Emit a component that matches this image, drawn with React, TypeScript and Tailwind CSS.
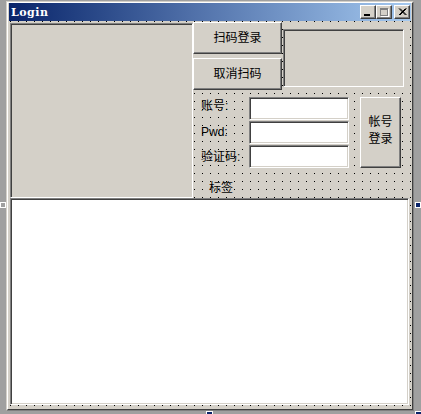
const raised =
  "border border-t-white border-l-white border-r-[#404040] border-b-[#404040] shadow-[inset_-1px_-1px_0_#808080] bg-[#d4d0c8]";
const sunken =
  "border border-t-[#808080] border-l-[#808080] border-r-white border-b-white shadow-[inset_1px_1px_0_#404040,inset_-1px_-1px_0_#d4d0c8]";

const TitleButton = ({ children }: { children: React.ReactNode }) => (
  <div className={`${raised} w-[16px] h-[14px] relative`}>{children}</div>
);

const FormButton = ({ children, className }: { children: React.ReactNode; className: string }) => (
  <div className={`${raised} flex flex-col items-center justify-center text-[12px] leading-[17px] text-black text-center whitespace-nowrap ${className}`}>
    {children}
  </div>
);

const Edit = () => <div className={`${sunken} bg-white w-[100px] h-[23px]`} />;

export default function App() {
  return (
    <div className="relative w-[421px] h-[414px] overflow-hidden bg-[#a0a0a0] pl-[6px] pt-[1px] font-['Liberation_Sans','Noto_Sans_CJK_SC',sans-serif] text-[12px]">
      {/* window */}
      <div className="w-[408px] h-[410px] border border-t-[#d4d0c8] border-l-[#d4d0c8] border-r-[#808080] border-b-[#808080]">
        <div className="h-full border border-t-white border-l-white border-r-[#404040] border-b-[#404040] bg-[#d4d0c8] px-px flex flex-col">
          {/* title bar */}
          <div className="h-[18px] shrink-0 flex items-center bg-gradient-to-r from-[#0a246a] via-[#4f6fa8] via-45% to-[#a6caf0] pl-[2px] pr-px">
            <span className="font-['DejaVu_Serif',serif] font-bold text-[11px] text-white leading-none tracking-[0.5px]">Login</span>
            <div className="ml-auto flex items-center">
              <TitleButton>
                <div className="absolute left-[3px] top-[8px] w-[6px] h-[2px] bg-black" />
              </TitleButton>
              <TitleButton>
                <div className="absolute left-[3px] top-[2px] w-[8px] h-[8px] border border-t-2 border-[#808080] shadow-[1px_1px_0_#fff]" />
              </TitleButton>
              <div className="ml-[2px]">
                <TitleButton>
                  <svg className="absolute left-[3px] top-[2px]" width="9" height="8" viewBox="0 0 9 8">
                    <path d="M1 0.5 L7.5 7 M2 0.5 L8.5 7 M7.5 0.5 L1 7 M8.5 0.5 L2 7" stroke="#000" strokeWidth="1" fill="none" />
                  </svg>
                </TitleButton>
              </div>
            </div>
          </div>

          {/* client area with design grid */}
          <div className="ml-px w-[401px] h-[388px] flex flex-col bg-[radial-gradient(circle_at_0.5px_0.5px,#000_0.8px,transparent_0.8px)] bg-[length:8px_8px]">
            <div className="flex h-[177px] shrink-0">
              <div className={`${sunken} bg-[#d4d0c8] mt-[2px] w-[183px] h-[175px]`} />
              <div className="flex flex-col">
                <div className="flex">
                  <div className="flex flex-col gap-[4px] pt-px">
                    <FormButton className="w-[89px] h-[32px]">扫码登录</FormButton>
                    <FormButton className="w-[89px] h-[32px]">取消扫码</FormButton>
                  </div>
                  <div className={`${sunken} bg-[#d4d0c8] ml-px mt-[8px] w-[121px] h-[58px]`} />
                </div>
                <div className="flex mt-[7px]">
                  <div className="w-[56px] pl-[8px] flex flex-col gap-px text-black">
                    <div className="h-[23px] pt-[2px] leading-[14px]">账号:</div>
                    <div className="h-[23px] pt-[4px] leading-[14px]">Pwd:</div>
                    <div className="h-[23px] pt-[5px] leading-[14px]">验证码:</div>
                  </div>
                  <div className="flex flex-col gap-px">
                    <Edit />
                    <Edit />
                    <Edit />
                  </div>
                  <FormButton className="ml-[11px] w-[41px] h-[71px] pb-[4px]">
                    <span>帐号</span>
                    <span>登录</span>
                  </FormButton>
                </div>
                <div className="ml-[16px] mt-[13px] leading-[14px] text-black">标签</div>
              </div>
            </div>
            <div className={`${sunken} bg-white w-[399px] h-[207px]`} />
          </div>
        </div>
      </div>

      {/* sizing handles */}
      <div className="absolute left-0 top-[202px] w-[6px] h-[6px] border border-white bg-[#a0a0a0]" />
      <div className="absolute left-[415px] top-[202px] w-[6px] h-[6px] border border-white bg-[#0a246a]" />
      <div className="absolute left-[206px] top-[411px] w-[7px] h-[6px] border border-white bg-[#0a246a]" />
      <div className="absolute left-[415px] top-[411px] w-[7px] h-[6px] border border-white bg-[#0a246a]" />
    </div>
  );
}
